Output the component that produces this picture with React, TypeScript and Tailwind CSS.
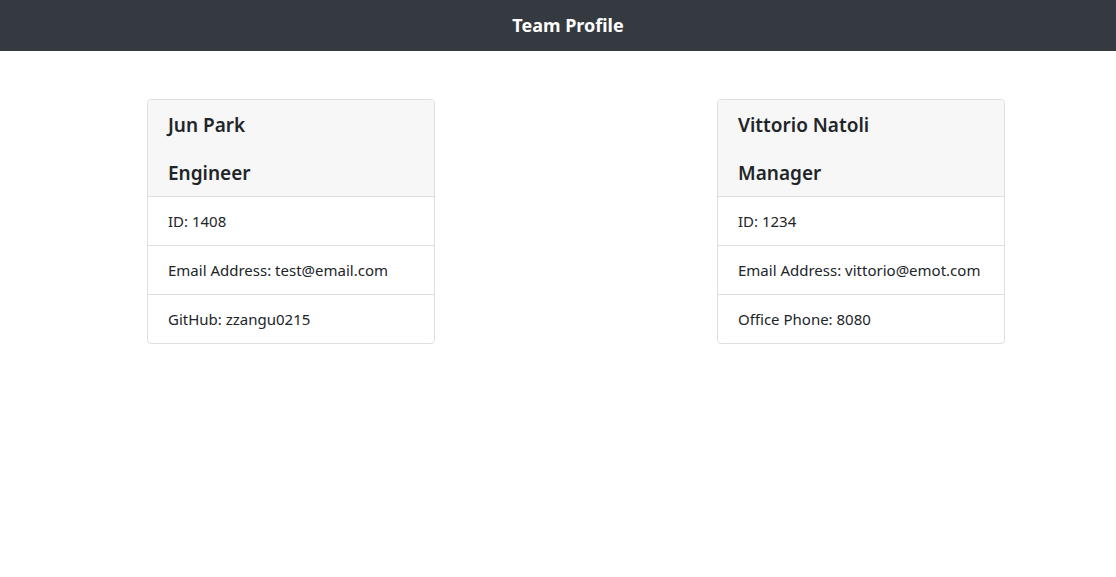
import React from "react";

type Member = { name: string; role: string; rows: string[] };

const members: Member[] = [
  { name: "Jun Park", role: "Engineer", rows: ["ID: 1408", "Email Address: test@email.com", "GitHub: zzangu0215"] },
  { name: "Vittorio Natoli", role: "Manager", rows: ["ID: 1234", "Email Address: vittorio@emot.com", "Office Phone: 8080"] },
];

function Card({ m }: { m: Member }) {
  return (
    <div className="w-[288px] rounded border border-[#dfdfdf] bg-white overflow-hidden">
      <div className="bg-[#f7f7f7] border-b border-[#dfdfdf] px-5 pt-[13px] pb-[11px]">
        <h5 className="text-[19px] leading-[24px] font-semibold mb-6">{m.name}</h5>
        <h5 className="text-[19px] leading-[24px] font-semibold">{m.role}</h5>
      </div>
      {m.rows.map((r, i) => (
        <div
          key={i}
          className={`px-5 py-3 text-[15px] leading-[24px] ${i < m.rows.length - 1 ? "border-b border-[#dfdfdf]" : ""}`}
        >
          {r}
        </div>
      ))}
    </div>
  );
}

export default function App() {
  return (
    <div
      className="min-h-[577px] bg-white text-[#212529]"
      style={{ fontFamily: '"Noto Sans", "Open Sans", sans-serif' }}
    >
      <header className="h-[51px] bg-[#343a40] flex items-center justify-center pl-5">
        <h1 className="text-white text-[18px] font-bold leading-[24px] -mt-[2px]">Team Profile</h1>
      </header>
      <main className="flex gap-[282px] pl-[147px] pt-12">
        {members.map((m) => (
          <Card key={m.name} m={m} />
        ))}
      </main>
    </div>
  );
}
